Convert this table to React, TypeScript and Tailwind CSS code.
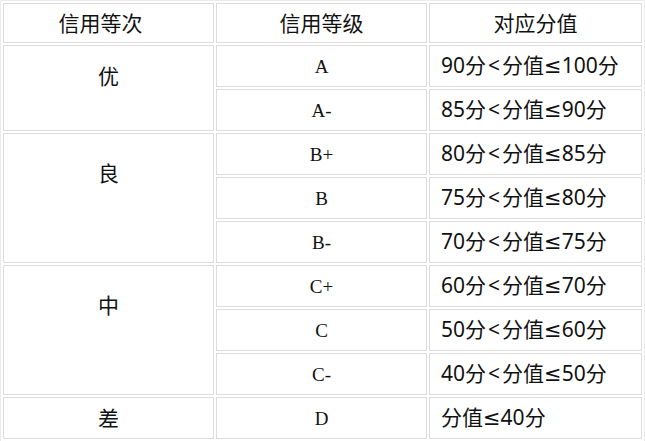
import * as React from "react";

/* Credit rating table: 信用等次 / 信用等级 / 对应分值 */

type Group = {
  tier: string;
  pad: string;
  rows: { grade: string; range: string }[];
};

const GROUPS: Group[] = [
  {
    tier: "优",
    pad: "pt-[14px]",
    rows: [
      { grade: "A", range: "90分<分值≤100分" },
      { grade: "A-", range: "85分<分值≤90分" },
    ],
  },
  {
    tier: "良",
    pad: "pt-[23px]",
    rows: [
      { grade: "B+", range: "80分<分值≤85分" },
      { grade: "B", range: "75分<分值≤80分" },
      { grade: "B-", range: "70分<分值≤75分" },
    ],
  },
  {
    tier: "中",
    pad: "pt-[23px]",
    rows: [
      { grade: "C+", range: "60分<分值≤70分" },
      { grade: "C", range: "50分<分值≤60分" },
      { grade: "C-", range: "40分<分值≤50分" },
    ],
  },
  {
    tier: "差",
    pad: "",
    rows: [{ grade: "D", range: "分值≤40分" }],
  },
];

const sans = "font-['Noto_Sans_CJK_SC','Noto_Sans',sans-serif]";
const serif = "font-['Liberation_Serif','Noto_Sans_CJK_SC',serif]";
const latin = "font-['Noto_Sans','Noto_Sans_CJK_SC',sans-serif]";
const cell = "border border-[#dcdcdc] p-0";

// "<" gets a little air on both sides, "≤" needs a single-bar glyph
const Range = ({ text }: { text: string }) => {
  const out: React.ReactNode[] = [];
  let buf = "";
  const flush = () => {
    if (buf) out.push(buf);
    buf = "";
  };
  Array.from(text).forEach((ch, i) => {
    if (ch === "<") {
      flush();
      out.push(<span key={i} className="px-[2px]">&lt;</span>);
    } else if (ch === "≤") {
      flush();
      out.push(<span key={i} className="font-['DejaVu_Sans',sans-serif]">≤</span>);
    } else buf += ch;
  });
  flush();
  return <>{out}</>;
};

export default function App() {
  return (
    <div className="w-[645px] h-[441px] bg-white overflow-hidden">
      <table
        className={`w-[645px] border-separate border-spacing-[2px] border border-[#ececec] text-[#111] table-fixed ${sans}`}
      >
        <colgroup>
          <col className="w-[211px]" />
          <col className="w-[211px]" />
          <col className="w-[213px]" />
        </colgroup>
        <thead>
          <tr className="h-[40px]">
            <th className={`${cell} font-normal text-[21px] text-center pr-[16px]`}>信用等次</th>
            <th className={`${cell} font-normal text-[21px] text-center`}>信用等级</th>
            <th className={`${cell} font-normal text-[21px] text-center`}>对应分值</th>
          </tr>
        </thead>
        <tbody>
          {GROUPS.map((g) =>
            g.rows.map((r, i) => (
              <tr key={r.grade} className="h-[42px]">
                {i === 0 && (
                  <td
                    rowSpan={g.rows.length}
                    className={`${cell} text-[21px] text-center ${
                      g.rows.length > 1 ? `align-top ${g.pad}` : "align-middle"
                    }`}
                  >
                    {g.tier}
                  </td>
                )}
                <td className={`${cell} ${serif} text-[19px] text-center align-middle pt-[2px]`}>{r.grade}</td>
                <td className={`${cell} ${latin} text-[21px] text-left align-middle pl-[11px]`}>
                  <Range text={r.range} />
                </td>
              </tr>
            ))
          )}
        </tbody>
      </table>
    </div>
  );
}
